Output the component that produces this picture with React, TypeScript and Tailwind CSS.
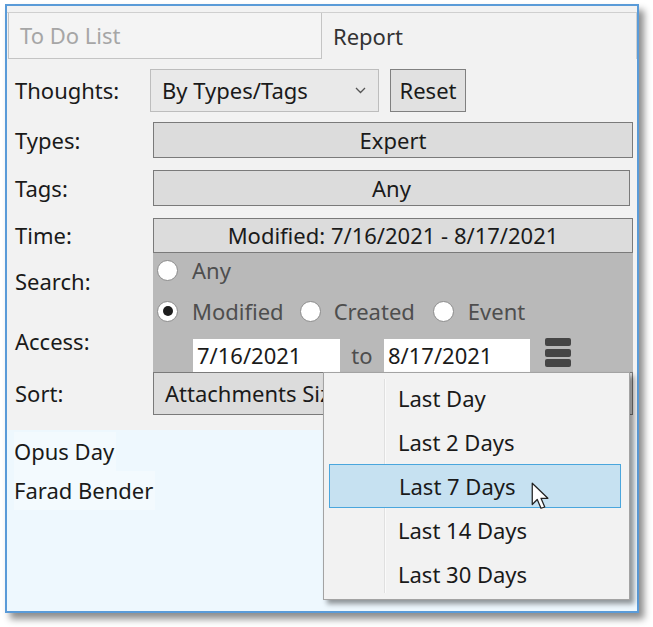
const menuItems = ['Last Day', 'Last 2 Days', 'Last 7 Days', 'Last 14 Days', 'Last 30 Days'];

function Radio({ checked }: { checked?: boolean }) {
  return (
    <span className="w-[21px] h-[21px] rounded-full bg-white border border-[#8c8c8c] flex items-center justify-center shrink-0">
      {checked && <span className="w-[10px] h-[10px] rounded-full bg-[#1e1e1e]" />}
    </span>
  );
}

function Cursor() {
  return (
    <svg width="20" height="30" viewBox="0 0 16 24" className="absolute left-[524px] top-[476px]">
      <path d="M1 1 L1 18 L5 14 L8 21 L11 20 L8 13 L13.5 13 Z" fill="white" stroke="#222" strokeWidth="1" strokeLinejoin="round" />
    </svg>
  );
}

export default function App() {
  return (
    <div className="w-[653px] h-[627px] bg-white pt-[4px] pl-[5px] font-['Noto_Sans',sans-serif] text-[22px] text-[#1a1a1a]">
      <div className="relative w-[634px] h-[609px] border-2 border-[#5a9bd8] bg-[#f2f2f2] shadow-[5px_6px_7px_rgba(0,0,0,0.45)] flex flex-col">
        {/* tab strip */}
        <div className="mt-[6px] h-[47px] border-t border-r border-[#cfcfcf] flex items-stretch shrink-0">
          <div className="ml-[1px] w-[314px] border-x border-b border-[#c4c4c4] bg-[#f4f4f4] flex items-center pl-[11px] text-[#a6a6a6]">
            To Do List
          </div>
          <div className="flex items-center pl-[11px] text-[#333]">Report</div>
        </div>

        {/* Thoughts */}
        <div className="mt-[10px] h-[43px] flex items-center shrink-0">
          <div className="w-[143px] pl-[8px]">Thoughts:</div>
          <div className="w-[229px] h-full bg-[#e9e9e9] border border-[#bdbdbd] flex items-center justify-between pl-[11px] pr-[12px]">
            <span>By Types/Tags</span>
            <svg width="11" height="7" viewBox="0 0 11 7">
              <path d="M1 1 L5.5 5.5 L10 1" fill="none" stroke="#555" strokeWidth="1.3" />
            </svg>
          </div>
          <div className="ml-[11px] w-[76px] h-full bg-[#e1e1e1] border border-[#808080] flex items-center justify-center">
            Reset
          </div>
        </div>

        {/* Types */}
        <div className="mt-[10px] h-[36px] flex items-center shrink-0">
          <div className="w-[146px] pl-[8px]">Types:</div>
          <div className="w-[480px] h-full bg-[#dcdcdc] border border-[#7a7a7a] flex items-center justify-center">Expert</div>
        </div>

        {/* Tags */}
        <div className="mt-[12px] h-[36px] flex items-center shrink-0">
          <div className="w-[146px] pl-[8px]">Tags:</div>
          <div className="w-[477px] h-full bg-[#dcdcdc] border border-[#7a7a7a] flex items-center justify-center">Any</div>
        </div>

        {/* Time */}
        <div className="mt-[12px] h-[35px] flex items-center shrink-0">
          <div className="w-[146px] pl-[8px]">Time:</div>
          <div className="w-[480px] h-full bg-[#dcdcdc] border border-[#7a7a7a] flex items-center justify-center">
            Modified: 7/16/2021 - 8/17/2021
          </div>
        </div>

        {/* Search / Access */}
        <div className="h-[57px] flex items-center pl-[8px] shrink-0">Search:</div>
        <div className="h-[62px] flex items-center pl-[8px] shrink-0">Access:</div>

        {/* Sort */}
        <div className="h-[43px] flex items-center shrink-0">
          <div className="w-[146px] pl-[8px]">Sort:</div>
          <div className="w-[480px] h-full bg-[#dcdcdc] border border-[#7a7a7a] flex items-center pl-[11px]">
            Attachments Size
          </div>
        </div>

        {/* list */}
        <div className="mt-[15px] flex-1 bg-[#eef8fe] pt-[2px] pl-[7px] flex flex-col items-start">
          <div className="h-[39px] flex items-center bg-[#f3fafe] pr-[2px]">Opus Day</div>
          <div className="h-[39px] flex items-center bg-[#f3fafe] pr-[2px]">Farad Bender</div>
        </div>

        {/* time drop-down panel */}
        <div className="absolute left-[146px] top-[247px] w-[480px] h-[119px] bg-[#b9b9b9] text-[#4e4e4e]">
          <div className="h-[34px] flex items-center pl-[4px]">
            <Radio />
            <span className="ml-[14px]">Any</span>
          </div>
          <div className="h-[48px] flex items-center pl-[4px]">
            <Radio checked />
            <span className="ml-[14px]">Modified</span>
            <span className="ml-[16px]"><Radio /></span>
            <span className="ml-[13px]">Created</span>
            <span className="ml-[18px]"><Radio /></span>
            <span className="ml-[14px]">Event</span>
          </div>
          <div className="h-[37px] flex items-end pl-[40px]">
            <div className="w-[147px] h-[33px] bg-white flex items-center pl-[4px] text-[#1a1a1a]">7/16/2021</div>
            <span className="w-[44px] h-[33px] flex items-center justify-center">to</span>
            <div className="w-[146px] h-[33px] bg-white flex items-center pl-[4px] text-[#1a1a1a]">8/17/2021</div>
            <div className="ml-[15px] mb-[5px] w-[26px] h-[29px] flex flex-col justify-between">
              <span className="h-[8px] rounded-[2px] bg-[#454545]" />
              <span className="h-[8px] rounded-[2px] bg-[#454545]" />
              <span className="h-[8px] rounded-[2px] bg-[#454545]" />
            </div>
          </div>
        </div>

        {/* context menu */}
        <div className="absolute left-[316px] top-[366px] w-[307px] h-[228px] bg-[#f2f2f2] border border-[#a3a3a3] shadow-[4px_4px_5px_rgba(0,0,0,0.4)] pt-[3px]">
          <div className="absolute left-[60px] top-[6px] bottom-[6px] w-[2px] border-l border-[#e0e0e0] bg-white/60" />
          {menuItems.map((item, i) => (
            <div
              key={item}
              className={`relative h-[44px] ml-[5px] flex items-center pl-[69px] ${
                i === 2 ? 'bg-[#c6e1f1] border border-[#4aa6dd] mr-[8px]' : 'mr-[5px]'
              }`}
            >
              {item}
            </div>
          ))}
        </div>

        <Cursor />
      </div>
    </div>
  );
}
